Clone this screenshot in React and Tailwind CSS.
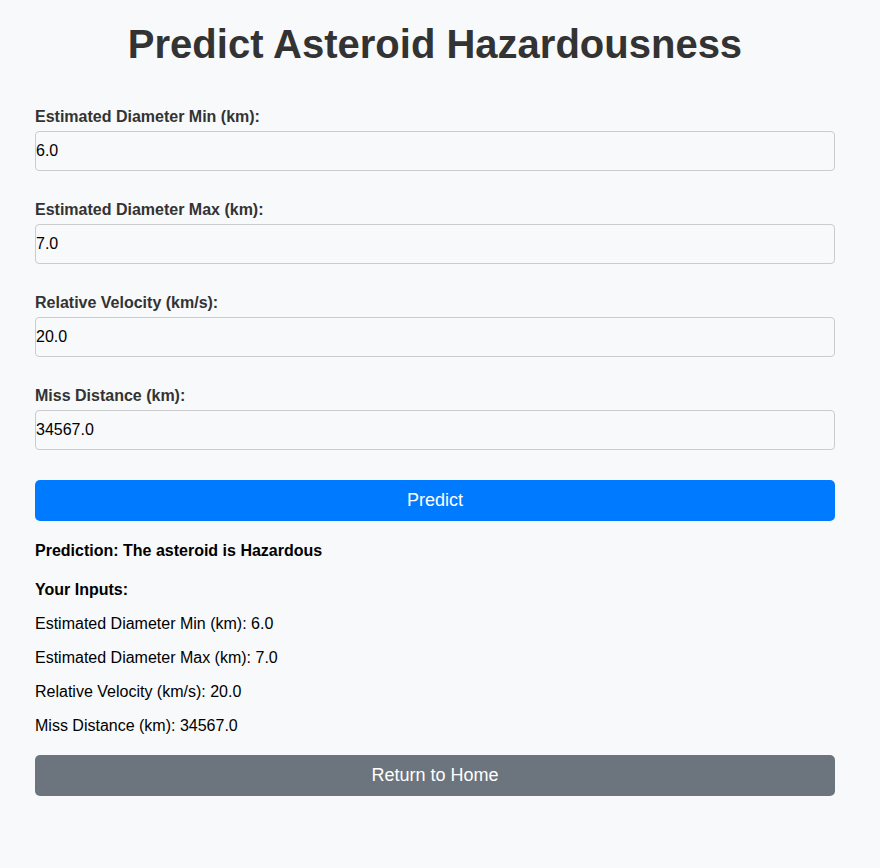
import { useState } from "react";

const fields = [
  { key: "min", label: "Estimated Diameter Min (km):", value: "6.0" },
  { key: "max", label: "Estimated Diameter Max (km):", value: "7.0" },
  { key: "vel", label: "Relative Velocity (km/s):", value: "20.0" },
  { key: "miss", label: "Miss Distance (km):", value: "34567.0" },
];

export default function App() {
  const [values, setValues] = useState(
    Object.fromEntries(fields.map((f) => [f.key, f.value]))
  );

  return (
    <div className="min-h-screen bg-[#f8f9fa] font-['Liberation_Sans',Arial,sans-serif] text-black">
      <div className="w-[800px] ml-[35px] pt-[21px] pb-[40px]">
        <h1 className="text-[40px] leading-[46px] font-bold text-center text-[#333] mb-[41px]">
          Predict Asteroid Hazardousness
        </h1>

        <form onSubmit={(e) => e.preventDefault()}>
          {fields.map((f) => (
            <div key={f.key} className="mb-[30px]">
              <label htmlFor={f.key} className="block text-[16px] leading-[18px] font-bold text-[#333] mb-[5px]">
                {f.label}
              </label>
              <input
                id={f.key}
                type="text"
                value={values[f.key]}
                onChange={(e) => setValues({ ...values, [f.key]: e.target.value })}
                className="block w-full h-[40px] px-0 bg-transparent border border-[#ccc] rounded-[4px] text-[16px] text-black focus:outline-none"
              />
            </div>
          ))}
          <button
            type="submit"
            className="block w-full py-[10px] text-[18px] leading-[21px] text-white bg-[#007bff] rounded-[5px] hover:bg-[#0069d9]"
          >
            Predict
          </button>
        </form>

        <div className="mt-[21px] text-[16px] leading-[18px]">
          <p className="font-bold">Prediction: The asteroid is Hazardous</p>
          <p className="font-bold mt-[21px]">Your Inputs:</p>
          {fields.map((f) => (
            <p key={f.key} className="mt-[16px]">
              {f.label.replace(":", "")}: {values[f.key]}
            </p>
          ))}
        </div>

        <button
          type="button"
          className="block w-full mt-[20px] py-[10px] text-[18px] leading-[21px] text-white bg-[#6c757d] rounded-[5px] hover:bg-[#5a6268]"
        >
          Return to Home
        </button>
      </div>
    </div>
  );
}
